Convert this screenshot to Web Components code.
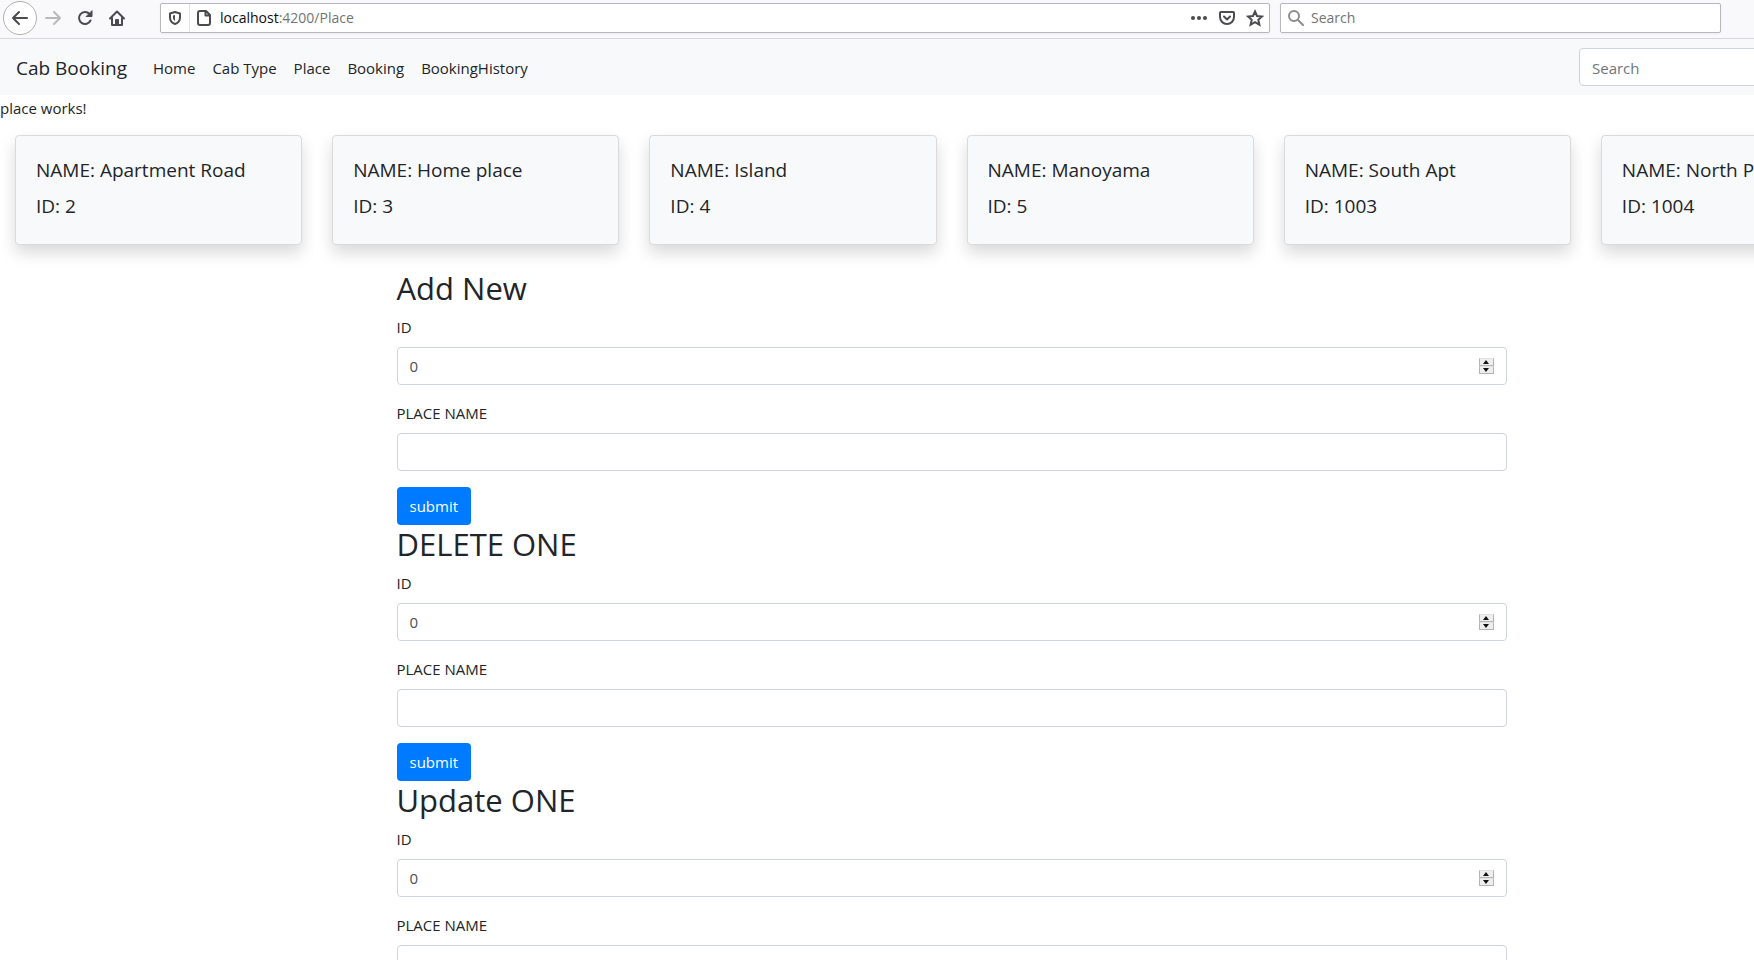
<!DOCTYPE html>
<html lang="en">
<head>
<meta charset="utf-8">
<title>Cab Booking</title>
<style>
  body {
    margin: 0;
    overflow-x: hidden;
    background: #fff;
    color: #212529;
    font: 15px/24px "Open Sans", "Noto Sans", sans-serif;
    --light: #f8f9fa;
    --edge: #ced4da;
    --muted: #6c757d;
    --blue: #007bff;
  }
</style>
</head>
<body>
<browser-toolbar></browser-toolbar>
<place-page></place-page>

<script>
const define = (name, html, setup) => {
  const template = document.createElement('template');
  template.innerHTML = html;
  customElements.define(name, class extends HTMLElement {
    constructor() {
      super();
      this.attachShadow({ mode: 'open' }).append(template.content.cloneNode(true));
    }
    connectedCallback() {
      if (setup) setup(this, this.shadowRoot);
    }
  });
};

define('browser-toolbar', `
  <style>
    :host { display: flex; align-items: center; box-sizing: border-box; height: 39px; padding: 0 33px 3px 3px;
      background: #f9f9fb; border-bottom: 1px solid #d7d7db; font-size: 14px; line-height: 20px; }
    button { display: grid; place-items: center; box-sizing: border-box; padding: 0; border: 0; background: none; color: #4a4a4f; flex: none; }
    svg { display: block; fill: none; stroke: currentColor; stroke-width: 2; stroke-linecap: round; stroke-linejoin: round; }
    nav { display: flex; align-items: center; flex: none; width: 157px; }
    nav button { width: 32px; height: 32px; }
    nav .back { width: 34px; height: 34px; border: 1px solid #b1b1b3; border-radius: 50%; background: #fff; }
    nav button:disabled { color: #b9b9bb; }
    .box { display: flex; align-items: center; box-sizing: border-box; height: 30px; background: #fff; border: 1px solid #b8b8bb; border-radius: 2px; box-shadow: 0 1px 3px rgba(0,0,0,.05); }
    .url { flex: 1; margin-right: 10px; }
    .url button { width: 28px; height: 28px; }
    .url .page { border-left: 1px solid #e3e3e6; }
    .address { flex: 1; padding-left: 3px; color: #737373; white-space: nowrap; }
    b { font-weight: 400; color: #0c0c0d; }
    .search { flex: 0 0 441px; padding-left: 6px; gap: 6px; color: #8c8c8e; }
    input { flex: 1; min-width: 0; padding: 0; border: 0; outline: 0; background: none; font: inherit; color: #0c0c0d; }
    input::placeholder { color: #737373; opacity: 1; }
  </style>
  <nav>
    <button class="back" aria-label="Back"><svg width="18" height="18" viewBox="0 0 18 18"><path d="M16 9H2M8 3L2 9l6 6"/></svg></button>
    <button disabled aria-label="Forward"><svg width="18" height="18" viewBox="0 0 18 18"><path d="M2 9h14M10 3l6 6-6 6"/></svg></button>
    <button aria-label="Reload"><svg width="18" height="18" viewBox="0 0 18 18"><path d="M14.500 11.500A6 6 0 1 1 13.500 5L15 6.500"/><path d="M16 2v5.500h-5.500z" fill="currentColor" stroke-width="1"/></svg></button>
    <button aria-label="Home"><svg width="18" height="18" viewBox="0 0 18 18"><path d="M2 9.500L9 2.500l7 7M4 9v7h10V9"/><path d="M8 15v-4h2v4" /></svg></button>
  </nav>
  <div class="box url">
    <button aria-label="Tracking protection"><svg width="14" height="16" viewBox="0 0 14 16"><path d="M7 2l5 1.500v4c0 3-2 5.500-5 6.500-3-1-5-3.500-5-6.500v-4z"/><path d="M7 5v6c-1.500-1-2-2-2-3.500V5.500z" fill="currentColor" stroke="none"/></svg></button>
    <button class="page" aria-label="Site information"><svg width="16" height="18" viewBox="0 0 16 18"><path d="M4 2h6l4 4v8a2 2 0 0 1-2 2H4a2 2 0 0 1-2-2V4a2 2 0 0 1 2-2zM9.500 2v4.500H14"/></svg></button>
    <div class="address"><b>localhost</b>:4200/Place</div>
    <button aria-label="Page actions"><svg width="16" height="16" viewBox="0 0 16 16" style="fill:currentColor;stroke:none"><circle cx="2" cy="8" r="2"/><circle cx="8" cy="8" r="2"/><circle cx="14" cy="8" r="2"/></svg></button>
    <button aria-label="Save to Pocket"><svg width="16" height="16" viewBox="0 0 16 16"><path d="M2 2h12a1 1 0 0 1 1 1v4a7 7 0 0 1-14 0V3a1 1 0 0 1 1-1zM5 6.500l3 3 3-3"/></svg></button>
    <button aria-label="Bookmark"><svg width="18" height="18" viewBox="0 0 18 18" style="stroke-linejoin:miter"><path d="M9 2.500l2 4.500 5 .500-3.700 3.300 1.100 5L9 13.200l-4.400 2.600 1.100-5L2 7.500 7 7z"/></svg></button>
  </div>
  <label class="box search">
    <svg width="18" height="18" viewBox="0 0 18 18"><circle cx="7" cy="7" r="5"/><path d="M11 11l5 5"/></svg>
    <input type="text" placeholder="Search" aria-label="Search the web">
  </label>
`);

define('site-nav', `
  <style>
    :host { display: flex; align-items: center; box-sizing: border-box; padding: 8px 16px; background: var(--light); }
    a { color: #212529; text-decoration: none; white-space: nowrap; }
    .brand { padding-top: 2px; font-size: 19px; line-height: 30px; margin-right: 18px; }
    ul { display: flex; flex: 1; gap: 1px; margin: 0; padding: 0; list-style: none; }
    li a { display: block; padding: 9px 8px 7px; }
    input { box-sizing: border-box; flex: none; width: 308px; height: 38px; padding: 7px 12px 5px; border: 1px solid var(--edge); border-radius: 4px; background: #fff; font: inherit; }
    input::placeholder { color: var(--muted); opacity: 1; }
  </style>
  <a class="brand" href="#">Cab Booking</a>
  <ul>
    <li><a href="#home">Home</a></li>
    <li><a href="#cab">Cab Type</a></li>
    <li><a href="#place">Place</a></li>
    <li><a href="#booking">Booking</a></li>
    <li><a href="#history">BookingHistory</a></li>
  </ul>
  <input type="search" placeholder="Search" aria-label="Search">
`);

define('place-card', `
  <style>
    :host { display: block; box-sizing: border-box; flex: 1 1 0; min-width: 0; padding: 0 15px; }
    article { padding: 22px 20px 14px; border: 1px solid #d9dadb; border-radius: 4px; background: var(--light); box-shadow: 0 8px 16px rgba(0,0,0,.15); }
    h5 { margin: 0 0 12px; font-size: 19px; line-height: 24px; font-weight: 400; white-space: nowrap; }
  </style>
  <article>
    <h5>NAME: <slot name="name"></slot></h5>
    <h5>ID: <slot name="id"></slot></h5>
    <slot></slot>
  </article>
`);

define('form-field', `
  <style>
    :host { display: block; margin-bottom: 16px; }
    label { display: block; margin-bottom: 8px; }
    .control { display: flex; align-items: center; box-sizing: border-box; height: 38px; padding: 0 12px; border: 1px solid var(--edge); border-radius: 4px; background: #fff; }
    input { flex: 1; min-width: 0; height: 24px; padding: 0; border: 0; outline: 0; background: none; color: #495057; font: inherit; appearance: textfield; }
    input::-webkit-inner-spin-button { display: none; }
    .steps { display: grid; width: 15px; }
    :host([type="text"]) .steps { display: none; }
    .steps button { display: grid; place-items: center; box-sizing: border-box; height: 8px; padding: 0; border: 1px solid #b4b4b4; border-top-color: #e3e3e3; background: #eee; }
    svg { display: block; fill: #111; }
  </style>
  <label for="value"><slot></slot></label>
  <div class="control">
    <input id="value">
    <div class="steps">
      <button type="button" aria-label="Increase"><svg width="6" height="4" viewBox="0 0 6 4"><path d="M0 4l3-4 3 4z"/></svg></button>
      <button type="button" aria-label="Decrease"><svg width="6" height="4" viewBox="0 0 6 4"><path d="M0 0l3 4 3-4z"/></svg></button>
    </div>
  </div>
`, (host, root) => {
  const input = root.querySelector('input');
  input.type = host.getAttribute('type');
  input.value = host.getAttribute('value') || '';
  const [up, down] = root.querySelectorAll('button');
  up.onclick = () => input.stepUp();
  down.onclick = () => input.stepDown();
});

define('place-form', `
  <style>
    :host { display: block; }
    h2 { margin: 0 0 8px; font-size: 31px; line-height: 38px; font-weight: 400; }
    button { display: block; height: 38px; padding: 0 13px; border: 0; border-radius: 4px; background: var(--blue); color: #fff; font: inherit; }
  </style>
  <form>
    <h2><slot></slot></h2>
    <form-field type="number" value="0">ID</form-field>
    <form-field type="text">PLACE NAME</form-field>
    <button type="button">submit</button>
  </form>
`);

define('place-page', `
  <style>
    /* The layout is wider than the viewport; the overflow runs off the right edge. */
    :host { display: block; width: calc(100% + 149px); }
    p { margin: 0 0 15px; padding-top: 1px; }
    .cards { display: flex; margin-bottom: 24px; }
    main { box-sizing: border-box; max-width: 1140px; margin: 0 auto; padding: 0 15px; }
  </style>
  <site-nav></site-nav>
  <p>place works!</p>
  <section class="cards">
    <place-card><span slot="name">Apartment Road</span><span slot="id">2</span></place-card>
    <place-card><span slot="name">Home place</span><span slot="id">3</span></place-card>
    <place-card><span slot="name">Island</span><span slot="id">4</span></place-card>
    <place-card><span slot="name">Manoyama</span><span slot="id">5</span></place-card>
    <place-card><span slot="name">South Apt</span><span slot="id">1003</span></place-card>
    <place-card><span slot="name">North P</span><span slot="id">1004</span></place-card>
  </section>
  <main>
    <place-form>Add New</place-form>
    <place-form>DELETE ONE</place-form>
    <place-form>Update ONE</place-form>
  </main>
`);
</script>
</body>
</html>
